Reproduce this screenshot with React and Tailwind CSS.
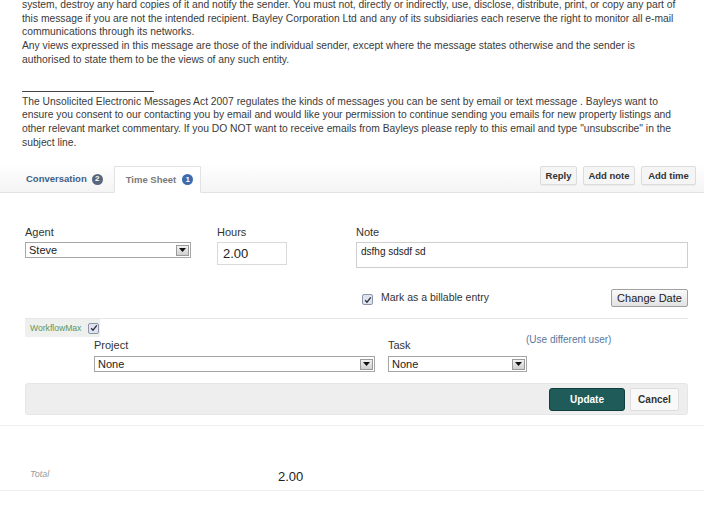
import React from 'react'

const sans = { fontFamily: '"Liberation Sans", Arial, sans-serif' }

function Tick({ className = '' }) {
  return (
    <span
      className={`inline-flex h-[11px] w-[11px] items-center justify-center rounded-[2px] border border-[#8d95a8] bg-[#dfe3ef] ${className}`}
    >
      <svg width="8" height="8" viewBox="0 0 8 8">
        <path d="M1.2 4.2 L3 6.2 L6.8 1.4" fill="none" stroke="#2a2f3a" strokeWidth="1.3" />
      </svg>
    </span>
  )
}

function SelectBox({ value, className = '' }) {
  return (
    <div
      className={`flex h-[16px] items-center justify-between border border-[#a6a6a6] bg-white pl-[3px] pr-[1px] text-[11px] leading-none text-[#222] ${className}`}
    >
      <span>{value}</span>
      <span className="flex h-[11px] w-[13px] items-center justify-center border border-[#9a9a9a] bg-[linear-gradient(#f2f2f2,#cfcfcf)]">
        <svg width="7" height="4" viewBox="0 0 7 4">
          <path d="M0 0 H7 L3.5 4 Z" fill="#111" />
        </svg>
      </span>
    </div>
  )
}

function Badge({ n, tone }) {
  return (
    <span
      className={`inline-flex h-[11px] w-[11px] items-center justify-center rounded-full text-[8px] font-bold leading-none text-white ${tone}`}
    >
      {n}
    </span>
  )
}

const actions = [
  { label: 'Reply', w: 'w-[37px]' },
  { label: 'Add note', w: 'w-[52px]' },
  { label: 'Add time', w: 'w-[55px]' },
]

function App() {
  return (
    <div className="h-[508px] w-[704px] overflow-hidden bg-white text-[#333]" style={sans}>
      {/* mail footer */}
      <div className="mt-[-2px] whitespace-nowrap px-[22px] text-[10.3px] leading-[13.7px] text-[#3a3a3a]">
        <p>
          system, destroy any hard copies of it and notify the sender. You must not, directly or indirectly, use, disclose, distribute, print, or copy any part of
          <br />
          this message if you are not the intended recipient. Bayley Corporation Ltd and any of its subsidiaries each reserve the right to monitor all e-mail
          <br />
          communications through its networks.
          <br />
          Any views expressed in this message are those of the individual sender, except where the message states otherwise and the sender is
          <br />
          authorised to state them to be the views of any such entity.
        </p>
        <div className="mt-[24px] h-px w-[132px] bg-[#444]" />
        <p className="mt-[3px]">
          The Unsolicited Electronic Messages Act 2007 regulates the kinds of messages you can be sent by email or text message . Bayleys want to
          <br />
          ensure you consent to our contacting you by email and would like your permission to continue sending you emails for new property listings and
          <br />
          other relevant market commentary. If you DO NOT want to receive emails from Bayleys please reply to this email and type "unsubscribe" in the
          <br />
          subject line.
        </p>
      </div>

      {/* tabs */}
      <div className="mt-[14px] flex h-[30px] items-end justify-between border-b border-[#e2e2e2] bg-[linear-gradient(#ffffff,#f4f4f4)] pr-[8px]">
        <div className="flex items-end pl-[14px]">
          <div className="flex h-[26px] items-center gap-[5px] pl-[12px] pr-[11px] text-[9.5px] font-bold text-[#3f5e86]">
            Conversation
            <Badge n="2" tone="bg-[#56677e]" />
          </div>
          <div className="mb-[-1px] flex h-[27px] items-center gap-[6px] border border-b-white border-[#e2e2e2] bg-white pl-[11px] pr-[7px] text-[9.5px] font-bold text-[#7a7a7a]">
            Time Sheet
            <Badge n="1" tone="bg-[#3b6cb0]" />
          </div>
        </div>
        <div className="flex gap-[6px] self-start pt-[3px]">
          {actions.map((b) => (
            <button
              key={b.label}
              type="button"
              className={`h-[19px] ${b.w} rounded-[2px] border border-[#dcdcdc] bg-[#f5f5f5] text-[9.5px] font-bold text-[#333] shadow-[0_1px_1px_rgba(0,0,0,0.05)]`}
            >
              {b.label}
            </button>
          ))}
        </div>
      </div>

      {/* form */}
      <div className="px-[25px] pr-[16px] pt-[33px] text-[11px]">
        <div className="flex">
          <div className="w-[192px]">
            <p className="mb-[3px] leading-[13px]">Agent</p>
            <SelectBox value="Steve" className="w-[166px]" />
          </div>
          <div className="w-[139px]">
            <p className="mb-[3px] leading-[13px]">Hours</p>
            <div className="flex h-[23px] w-[70px] items-center border border-[#dadada] px-[5px] text-[13px] text-[#222]">
              2.00
            </div>
          </div>
          <div className="flex-1">
            <p className="mb-[3px] leading-[13px]">Note</p>
            <div className="h-[26px] border border-[#cfcfcf] px-[4px] pt-[4px] text-[10px] leading-none text-[#222]">
              dsfhg sdsdf sd
            </div>
          </div>
        </div>

        <div className="mt-[21px] flex h-[18px] items-center">
          <div className="w-[337px]" />
          <Tick className="mt-[3px]" />
          <span className="mb-[3px] ml-[8px] text-[10.5px] leading-none text-[#333]">Mark as a billable entry</span>
          <button
            type="button"
            className="ml-auto h-[18px] w-[77px] rounded-[2px] border border-[#a0a0a0] bg-[linear-gradient(#fafafa,#e2e2e2)] text-[11px] text-[#222]"
          >
            Change Date
          </button>
        </div>

        <div className="mt-[11px] border-t border-[#e6e6e6]">
          <div className="flex h-[18px] w-[75px] items-center gap-[7px] bg-[#edf0ec] pl-[5px] text-[8.6px] text-[#5f955f]">
            WorkflowMax
            <Tick />
          </div>
          <div className="flex">
            <div className="ml-[69px] w-[294px]">
              <p className="mb-[4px] mt-[2px] leading-[13px]">Project</p>
              <SelectBox value="None" className="w-[281px]" />
            </div>
            <div className="w-[138px]">
              <p className="mb-[4px] mt-[2px] leading-[13px]">Task</p>
              <SelectBox value="None" className="w-[139px]" />
            </div>
            <p className="mt-[-5px] text-[10px] text-[#5a77a0]">(Use different user)</p>
          </div>
        </div>

        <div className="mt-[11px] flex h-[32px] items-center justify-end gap-[5px] rounded-[3px] border border-[#e6e6e6] bg-[#eeeeee] pr-[8px]">
          <button
            type="button"
            className="h-[23px] w-[76px] rounded-[3px] border border-[#0f3f3d] bg-[#1f5b59] text-[10px] font-bold text-white"
          >
            Update
          </button>
          <button
            type="button"
            className="h-[23px] w-[49px] rounded-[2px] border border-[#dddddd] bg-[#f9f9f9] text-[10px] font-bold text-[#333]"
          >
            Cancel
          </button>
        </div>
      </div>

      <div className="mt-[10px] border-t border-[#eeeeee]">
        <div className="flex h-[64px] items-start">
          <span className="mt-[43px] w-[278px] pl-[30px] text-[9px] leading-[11px] italic text-[#9a9a9a]">Total</span>
          <span className="mt-[43px] text-[13px] leading-[15px] text-[#222]">2.00</span>
        </div>
        <div className="border-t border-[#eeeeee]" />
      </div>
    </div>
  )
}

export default App
